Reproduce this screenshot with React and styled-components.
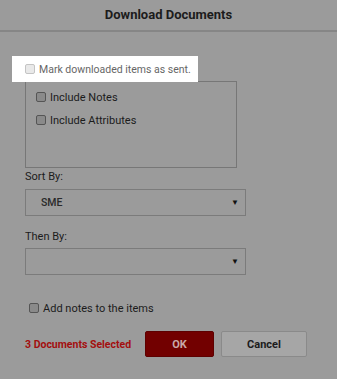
import React from 'react';
import styled, { createGlobalStyle } from 'styled-components';

const GlobalStyle = createGlobalStyle`
  html, body {
    margin: 0;
    padding: 0;
    background: #9b9b9b;
  }
  body {
    font-family: Roboto, "Liberation Sans", Arial, sans-serif;
  }
`;

const Dialog = styled.div`
  width: 337px;
  height: 379px;
  background: #9b9b9b;
  overflow: hidden;
`;

const Header = styled.div`
  height: 32px;
  border-bottom: 2px solid #868686;
  display: flex;
  align-items: center;
  justify-content: center;
  font-size: 13px;
  font-weight: 700;
  color: #1c1c1c;
  padding-bottom: 1px;
  box-sizing: border-box;
`;

const Body = styled.div`
  padding: 24px 0 0 25px;
  display: flex;
  flex-direction: column;
`;

const Highlight = styled.label`
  position: relative;
  z-index: 1;
  margin-left: -13px;
  width: 186px;
  height: 26px;
  box-sizing: border-box;
  padding-left: 13px;
  background: #fff;
  display: flex;
  align-items: center;
  gap: 4px;
  font-size: 10.5px;
  color: #666;
  white-space: nowrap;
  margin-bottom: -1px;
`;

const Box = styled.span`
  display: inline-block;
  width: 10px;
  height: 10px;
  border-radius: 2px;
  box-sizing: border-box;
  border: 1px solid ${p => (p.light ? '#c4c4c4' : '#555')};
  background: ${p => (p.light ? '#e9e9e9' : '#8a8a8a')};
  flex-shrink: 0;
`;

const Group = styled.div`
  width: 212px;
  height: 87px;
  box-sizing: border-box;
  border: 1px solid #777;
  padding: 7px 0 0 10px;
  display: flex;
  flex-direction: column;
  gap: 7px;
`;

const Option = styled.label`
  display: flex;
  align-items: center;
  gap: 4px;
  height: 16px;
  font-size: 11px;
  color: #1c1c1c;
  white-space: nowrap;
`;

const FieldLabel = styled.div`
  font-size: 11px;
  color: #1c1c1c;
  margin-top: ${p => p.top}px;
  height: 14px;
  line-height: 14px;
`;

const Select = styled.div`
  margin-top: ${p => p.top}px;
  width: 221px;
  height: 27px;
  box-sizing: border-box;
  border: 1px solid #7b7b7b;
  display: flex;
  align-items: center;
  justify-content: space-between;
  padding: 0 6px 0 15px;
  font-size: 10.5px;
  font-weight: 500;
  color: #2a2a2a;
`;

const Arrow = styled.span`
  font-size: 8px;
  color: #111;
`;

const AddNotes = styled.label`
  margin-top: 26px;
  margin-left: 4px;
  display: flex;
  align-items: center;
  gap: 4px;
  font-size: 11px;
  color: #1c1c1c;
  height: 14px;
  white-space: nowrap;
`;

const Footer = styled.div`
  margin-top: 16px;
  display: flex;
  align-items: center;
`;

const Selected = styled.div`
  width: 120px;
  font-size: 10.5px;
  font-weight: 700;
  color: #a30f0f;
  white-space: nowrap;
`;

const Button = styled.button`
  height: 26px;
  width: ${p => p.w}px;
  margin-left: ${p => p.ml}px;
  box-sizing: border-box;
  border-radius: 2px;
  border: 1px solid ${p => (p.primary ? '#5e0000' : '#8a8a8a')};
  background: ${p => (p.primary ? '#720000' : '#a6a6a6')};
  color: ${p => (p.primary ? '#c9a8a8' : '#1c1c1c')};
  font-family: inherit;
  font-size: 11px;
  font-weight: 700;
  padding: 0;
`;

export default function App() {
  return (
    <Dialog>
      <GlobalStyle />
      <Header>Download Documents</Header>
      <Body>
        <Highlight>
          <Box light />
          Mark downloaded items as sent.
        </Highlight>
        <Group>
          <Option>
            <Box />
            Include Notes
          </Option>
          <Option>
            <Box />
            Include Attributes
          </Option>
        </Group>
        <FieldLabel top={2}>Sort By:</FieldLabel>
        <Select top={5}>
          <span>SME</span>
          <Arrow>▼</Arrow>
        </Select>
        <FieldLabel top={14}>Then By:</FieldLabel>
        <Select top={4}>
          <span />
          <Arrow>▼</Arrow>
        </Select>
        <AddNotes>
          <Box />
          Add notes to the items
        </AddNotes>
        <Footer>
          <Selected>3 Documents Selected</Selected>
          <Button primary w={69} ml={0}>OK</Button>
          <Button w={86} ml={7}>Cancel</Button>
        </Footer>
      </Body>
    </Dialog>
  );
}
